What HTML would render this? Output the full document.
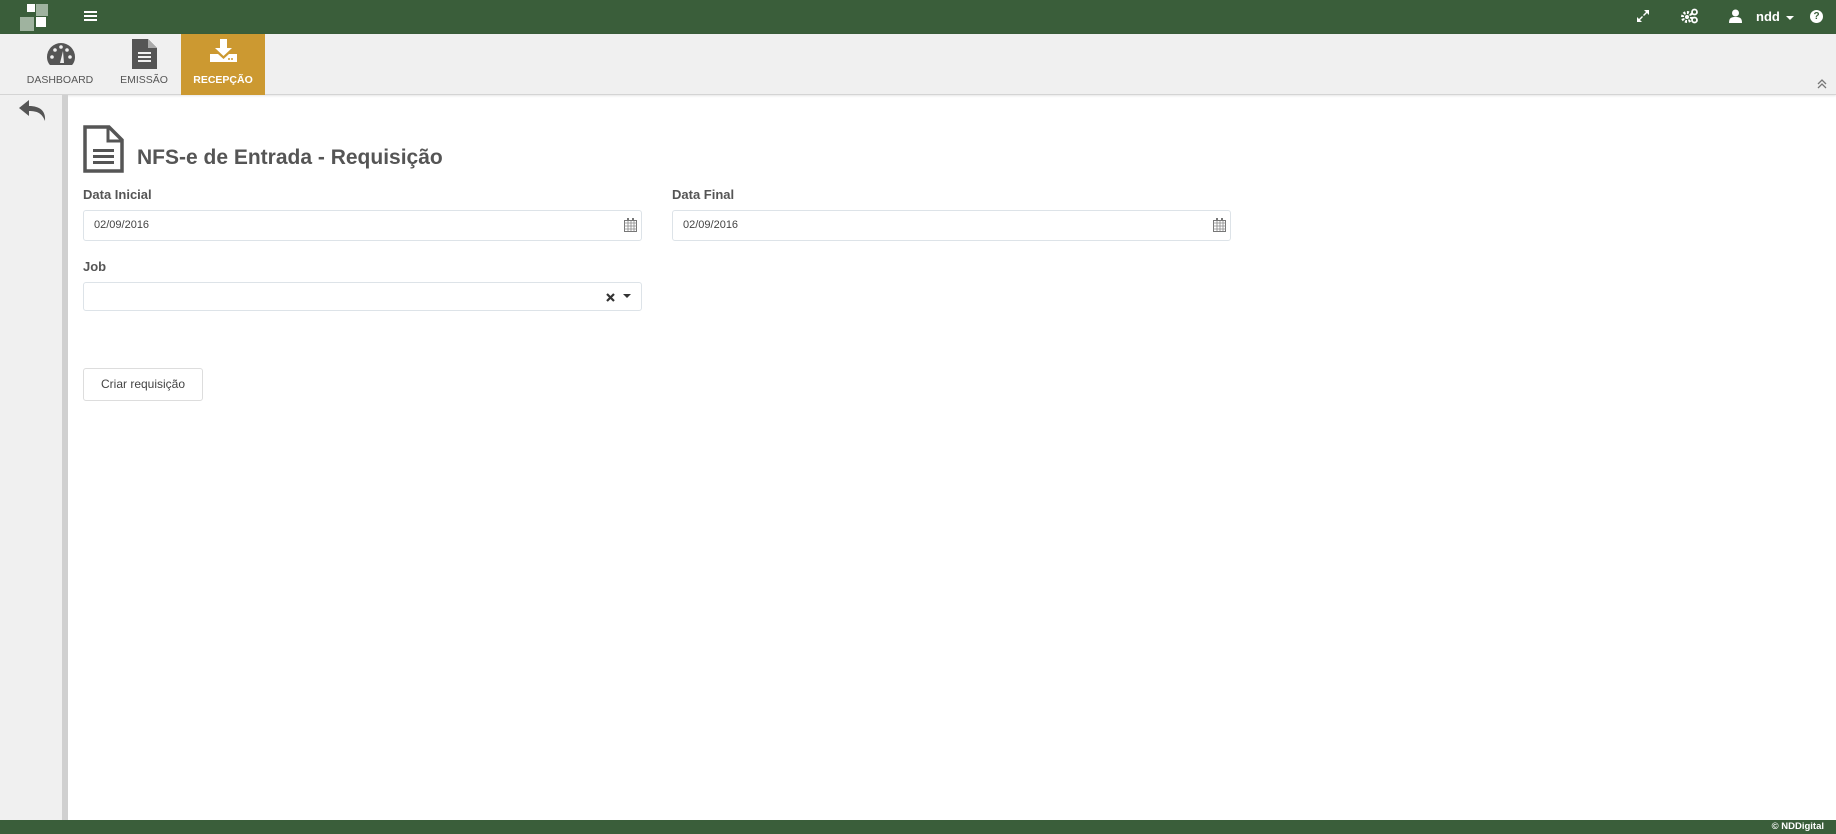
<!DOCTYPE html>
<html><head><meta charset="utf-8"><style>
*{box-sizing:border-box;margin:0;padding:0}
body{width:1836px;height:834px;position:relative;overflow:hidden;background:#fff;font-family:"Liberation Sans",sans-serif;color:#555}
.top{position:absolute;left:0;top:0;width:1836px;height:34px;background:#3a5e3a}
.tool{position:absolute;left:0;top:34px;width:1836px;height:61px;background:#f0f0f0;border-bottom:1px solid #d4d4d4;box-shadow:0 1px 2px rgba(0,0,0,.1)}
.tab{position:absolute;top:0;height:61px;text-align:center;font-size:10.5px;color:#555}
.tab span{position:absolute;left:0;right:0;top:40px}
.side{position:absolute;left:0;top:95px;height:725px;background:#f0f0f0;border-right:6px solid #d0d0d0;width:68px}
.foot{position:absolute;left:0;top:820px;width:1836px;height:14px;background:#3a5e3a;color:#fff;font-size:9.5px;font-weight:bold;text-align:right;padding-right:12px;line-height:14px}
.lbl{position:absolute;font-size:13px;font-weight:bold;color:#555}
.inp{position:absolute;height:31px;border:1px solid #dde3e8;border-radius:3px;font-size:11px;color:#444;line-height:29px;padding-left:10px}
.btn{position:absolute;left:83px;top:368px;width:120px;height:33px;border:1px solid #ddd;border-radius:3px;font-size:12px;color:#444;text-align:center;line-height:31px}
</style></head><body>
<div class="top">
 <div style="position:absolute;left:27px;top:4px;width:8px;height:8px;background:#fff"></div>
 <div style="position:absolute;left:36px;top:4px;width:12px;height:12px;background:#9fb39f"></div>
 <div style="position:absolute;left:20px;top:17px;width:14px;height:14px;background:#9fb39f"></div>
 <div style="position:absolute;left:36px;top:17px;width:10px;height:10px;background:#fff"></div>
 <div style="position:absolute;left:84px;top:11px;width:13px;height:2px;background:#fff;box-shadow:0 4px 0 #fff,0 8px 0 #fff"></div>
 <svg style="position:absolute;left:1636px;top:9px" width="14" height="14" viewBox="0 0 14 14"><path d="M8 1h5v5l-2-2-3 3-1-1 3-3zM6 13H1V8l2 2 3-3 1 1-3 3z" fill="#fff"/></svg>
 <svg style="position:absolute;left:1681px;top:8px" width="18" height="16" viewBox="0 0 18 16"><circle cx="6" cy="9" r="4.5" fill="none" stroke="#fff" stroke-width="3" stroke-dasharray="2 1.5"/><circle cx="6" cy="9" r="2" fill="#fff"/><circle cx="13.5" cy="4" r="2.5" fill="none" stroke="#fff" stroke-width="1.8"/><circle cx="13.5" cy="12" r="2.5" fill="none" stroke="#fff" stroke-width="1.8"/></svg>
 <svg style="position:absolute;left:1729px;top:9px" width="13" height="14" viewBox="0 0 13 14"><circle cx="6.5" cy="4" r="3.5" fill="#fff"/><path d="M0 14c0-5 2-6 6.5-6s6.5 1 6.5 6z" fill="#fff"/></svg>
 <div style="position:absolute;left:1756px;top:9px;color:#fff;font-size:13px;font-weight:bold">ndd</div>
 <div style="position:absolute;left:1786px;top:16px;border:4px solid transparent;border-top-color:#fff"></div>
 <div style="position:absolute;left:1810px;top:10px;width:13px;height:13px;border-radius:50%;background:#fff;color:#3a5e3a;font-size:10px;font-weight:bold;text-align:center;line-height:13px">?</div>
</div>
<div class="tool">
 <div class="tab" style="left:18px;width:84px">
  <svg style="position:absolute;left:28px;top:8px" width="30" height="24" viewBox="0 0 30 24"><path d="M15 1A14 14 0 0 0 1 15c0 3 1 6 3 8h22c2-2 3-5 3-8A14 14 0 0 0 15 1z" fill="#555"/><circle cx="6" cy="15" r="1.8" fill="#f0f0f0"/><circle cx="9" cy="8" r="1.8" fill="#f0f0f0"/><circle cx="15" cy="5" r="1.8" fill="#f0f0f0"/><circle cx="24" cy="15" r="1.8" fill="#f0f0f0"/><circle cx="21" cy="8" r="1.8" fill="#f0f0f0"/><path d="M14 21l3-12 1 12z" fill="#f0f0f0"/></svg>
  <span>DASHBOARD</span></div>
 <div class="tab" style="left:112px;width:64px">
  <svg style="position:absolute;left:20px;top:5px" width="25" height="30" viewBox="0 0 25 30"><path d="M0 0h16l9 9v21H0z" fill="#555"/><path d="M16 0v9h9" fill="#aaa"/><rect x="6" y="13" width="13" height="2" fill="#f0f0f0"/><rect x="6" y="17" width="13" height="2" fill="#f0f0f0"/><rect x="6" y="21" width="13" height="2" fill="#f0f0f0"/></svg>
  <span>EMISSÃO</span></div>
 <div class="tab" style="left:181px;width:84px;background:#cc9931;color:#fff;font-weight:bold">
  <svg style="position:absolute;left:29px;top:5px" width="27" height="24" viewBox="0 0 27 24"><path d="M10 0h7v9h5l-8.5 8L5 9h5z" fill="#fff"/><path d="M0 15h8l5.5 5 5.5-5h8v8H0z" fill="#fff"/><circle cx="19" cy="20" r="1" fill="#cc9931"/><circle cx="22" cy="20" r="1" fill="#cc9931"/></svg>
  <span>RECEPÇÃO</span></div>
 <svg style="position:absolute;left:1817px;top:45px" width="10" height="10" viewBox="0 0 10 10"><path d="M1 5l4-4 4 4M1 9l4-4 4 4" fill="none" stroke="#777" stroke-width="1.3"/></svg>
</div>
<div class="side">
 <svg style="position:absolute;left:18px;top:5px" width="30" height="24" viewBox="0 0 30 24"><path d="M11 0L1 8l10 8v-5c8 0 13 2 16 10 1-10-5-15-16-15z" fill="#555"/></svg>
</div>
<svg style="position:absolute;left:83px;top:125px" width="41" height="48" viewBox="0 0 41 48"><path d="M2 2h24l13 13v31H2z" fill="none" stroke="#555" stroke-width="3.5"/><path d="M25 2v14h14" fill="none" stroke="#555" stroke-width="3"/><rect x="10" y="24" width="21" height="3" fill="#555"/><rect x="10" y="30" width="21" height="3" fill="#555"/><rect x="10" y="36" width="21" height="3" fill="#555"/></svg>
<div style="position:absolute;left:137px;top:146px;font-size:21px;font-weight:bold;color:#555">NFS-e de Entrada - Requisição</div>
<div class="lbl" style="left:83px;top:187px">Data Inicial</div>
<div class="lbl" style="left:672px;top:187px">Data Final</div>
<div class="inp" style="left:83px;top:210px;width:559px">02/09/2016</div>
<div class="inp" style="left:672px;top:210px;width:559px">02/09/2016</div>
<svg style="position:absolute;left:624px;top:218px" width="13" height="14" viewBox="0 0 13 14"><rect x="0.5" y="2.5" width="12" height="11" fill="none" stroke="#777"/><path d="M0 5h13M4 3v10M7 3v10M10 3v10M0 8h13M0 11h13" stroke="#888" stroke-width=".8"/><rect x="3" y="0" width="2" height="3" fill="#777"/><rect x="8" y="0" width="2" height="3" fill="#777"/></svg>
<svg style="position:absolute;left:1213px;top:218px" width="13" height="14" viewBox="0 0 13 14"><rect x="0.5" y="2.5" width="12" height="11" fill="none" stroke="#777"/><path d="M0 5h13M4 3v10M7 3v10M10 3v10M0 8h13M0 11h13" stroke="#888" stroke-width=".8"/><rect x="3" y="0" width="2" height="3" fill="#777"/><rect x="8" y="0" width="2" height="3" fill="#777"/></svg>
<div class="lbl" style="left:83px;top:259px">Job</div>
<div class="inp" style="left:83px;top:282px;width:559px;height:29px"></div>
<svg style="position:absolute;left:606px;top:293px" width="9" height="9" viewBox="0 0 9 9"><path d="M1 1l7 7M8 1l-7 7" stroke="#333" stroke-width="2.2"/></svg>
<div style="position:absolute;left:623px;top:294px;border:4px solid transparent;border-top-color:#333"></div>
<div class="btn">Criar requisição</div>
<div class="foot">© NDDigital</div>
</body></html>
